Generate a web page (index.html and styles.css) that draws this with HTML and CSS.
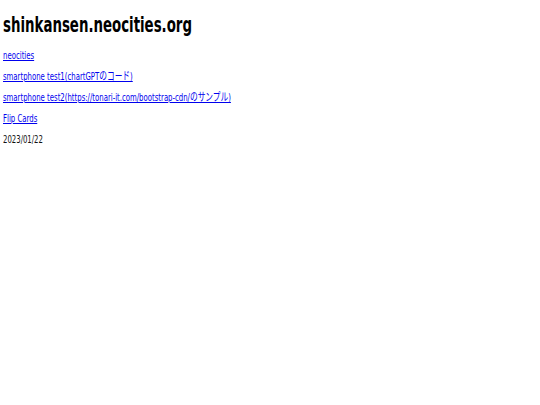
FILE: index.html
```html
<!DOCTYPE html>
<html lang="ja">
<head>
<meta charset="utf-8">
<title>shinkansen.neocities.org</title>
<link rel="stylesheet" href="styles.css">
</head>
<body>
<main class="page">
<h1 class="title">shinkansen.neocities.org</h1>
<p class="item"><a href="#">neocities</a></p>
<p class="item"><a href="#">smartphone test1(chartGPTのコード)</a></p>
<p class="item"><a href="#">smartphone test2(https://tonari-it.com/bootstrap-cdn/のサンプル)</a></p>
<p class="item"><a href="#">Flip Cards</a></p>
<p class="item">2023/01/22</p>
</main>
</body>
</html>
```
FILE: styles.css
```css
html, body {
  background: #ffffff;
}
body {
  margin: 0;
  padding: 12px 3px 0 3px;
  font-family: "DejaVu Sans Condensed", "DejaVu Sans", "Noto Sans CJK JP", sans-serif;
  color: #111111;
}
.page {
  display: block;
  transform: scaleX(0.7);
  transform-origin: 0 0;
  white-space: nowrap;
}
.title {
  font-size: 21.2px;
  font-weight: bold;
  line-height: 26px;
  margin: 0 0 11px 0;
  color: #000000;
}
.item {
  font-size: 11px;
  line-height: 13px;
  margin: 0 0 8px 0;
}
.item a {
  color: #0000ee;
}
```
